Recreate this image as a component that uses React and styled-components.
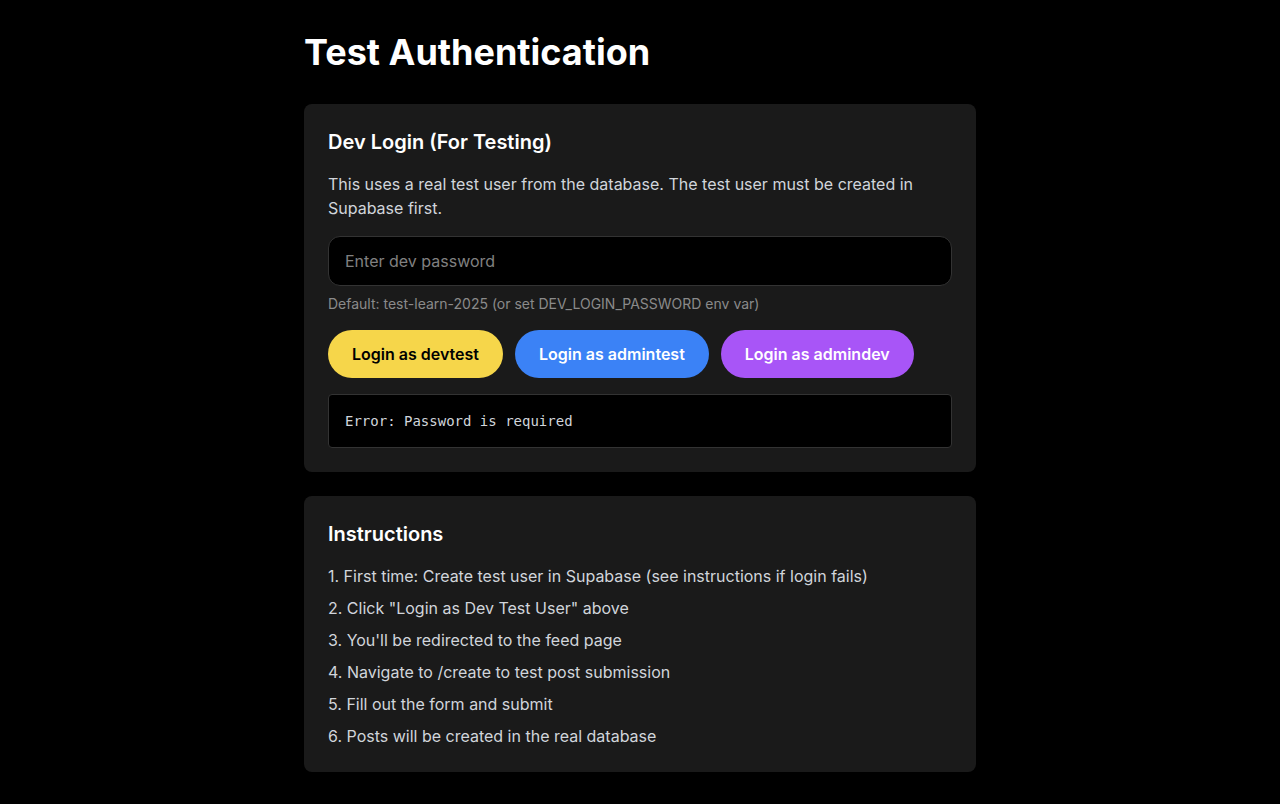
import React, { useState } from 'react';
import styled, { createGlobalStyle } from 'styled-components';

const GlobalStyle = createGlobalStyle`
  * {
    box-sizing: border-box;
  }

  body {
    margin: 0;
    background: #000000;
    color: #ffffff;
    font-family: Inter, "Noto Sans", sans-serif;
  }
`;

const Page = styled.div`
  min-height: 100vh;
  padding: 32px 16px;
`;

const Container = styled.div`
  max-width: 672px;
  margin: 0 auto;
`;

const Title = styled.h1`
  font-size: 36px;
  line-height: 40px;
  font-weight: 700;
  margin: 0 0 32px;
`;

const Card = styled.section`
  background: #1a1a1a;
  border-radius: 8px;
  padding: 24px;
  margin-bottom: 24px;
`;

const CardTitle = styled.h2`
  font-size: 20px;
  line-height: 28px;
  font-weight: 600;
  margin: 0 0 16px;
`;

const Text = styled.p`
  font-size: 16px;
  line-height: 24px;
  color: #d1d5db;
  margin: 0 0 16px;
`;

const Input = styled.input`
  display: block;
  width: 100%;
  padding: 12px 16px;
  font-family: inherit;
  font-size: 16px;
  line-height: 24px;
  color: #ffffff;
  background: #000000;
  border: 1px solid #333333;
  border-radius: 12px;

  &::placeholder {
    color: #808080;
  }

  &:focus {
    outline: none;
    border-color: #555555;
  }
`;

const Hint = styled.p`
  font-size: 14px;
  line-height: 20px;
  color: #8a8a8a;
  margin: 8px 0 16px;
`;

const Buttons = styled.div`
  display: flex;
  flex-wrap: wrap;
  gap: 12px;
`;

const palette = {
  yellow: { bg: '#f6d64a', fg: '#000000' },
  blue: { bg: '#3b82f6', fg: '#ffffff' },
  purple: { bg: '#a855f7', fg: '#ffffff' },
};

const LoginButton = styled.button`
  padding: 12px 24px;
  font-family: inherit;
  font-size: 16px;
  line-height: 24px;
  font-weight: 600;
  border: none;
  border-radius: 9999px;
  cursor: pointer;
  background: ${props => palette[props.$tone].bg};
  color: ${props => palette[props.$tone].fg};

  &:hover {
    opacity: 0.9;
  }
`;

const Output = styled.pre`
  margin: 16px 0 0;
  padding: 16px;
  background: #000000;
  border: 1px solid #333333;
  border-radius: 4px;
  font-family: "DejaVu Sans Mono", "Liberation Mono", monospace;
  font-size: 14px;
  line-height: 20px;
  color: #d1d5db;
  white-space: pre-wrap;
`;

const Steps = styled.ol`
  list-style: none;
  margin: 0;
  padding: 0;
  display: flex;
  flex-direction: column;
  gap: 8px;

  li {
    font-size: 16px;
    line-height: 24px;
    color: #d1d5db;
  }
`;

const steps = [
  '1. First time: Create test user in Supabase (see instructions if login fails)',
  '2. Click "Login as Dev Test User" above',
  "3. You'll be redirected to the feed page",
  '4. Navigate to /create to test post submission',
  '5. Fill out the form and submit',
  '6. Posts will be created in the real database',
];

const users = [
  { name: 'devtest', tone: 'yellow' },
  { name: 'admintest', tone: 'blue' },
  { name: 'admindev', tone: 'purple' },
];

export default function App() {
  const [password, setPassword] = useState('');
  const [result, setResult] = useState('Error: Password is required');

  const login = (name) => {
    if (!password) {
      setResult('Error: Password is required');
      return;
    }
    setResult(`Logging in as ${name}...`);
  };

  return (
    <Page>
      <GlobalStyle />
      <Container>
        <Title>Test Authentication</Title>

        <Card>
          <CardTitle>Dev Login (For Testing)</CardTitle>
          <Text>
            This uses a real test user from the database. The test user must be created in Supabase first.
          </Text>
          <Input
            type="password"
            placeholder="Enter dev password"
            value={password}
            onChange={(e) => setPassword(e.target.value)}
          />
          <Hint>Default: test-learn-2025 (or set DEV_LOGIN_PASSWORD env var)</Hint>
          <Buttons>
            {users.map(u => (
              <LoginButton key={u.name} $tone={u.tone} onClick={() => login(u.name)}>
                Login as {u.name}
              </LoginButton>
            ))}
          </Buttons>
          {result && <Output>{result}</Output>}
        </Card>

        <Card>
          <CardTitle>Instructions</CardTitle>
          <Steps>
            {steps.map(s => (
              <li key={s}>{s}</li>
            ))}
          </Steps>
        </Card>
      </Container>
    </Page>
  );
}
